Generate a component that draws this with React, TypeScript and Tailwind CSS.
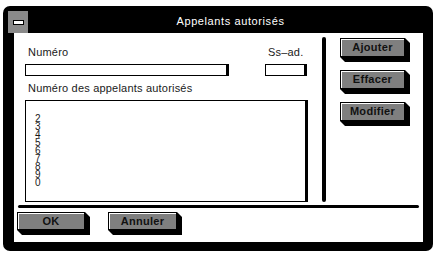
import type { ReactNode } from 'react'

const font = { fontFamily: '"Liberation Sans", Arial, sans-serif' }

function BevelButton({ label, className }: { label: string; className: string }) {
  return (
    <div
      className={`relative bg-black [clip-path:polygon(0_0,calc(100%_-_5px)_0,100%_5px,100%_100%,5px_100%,0_calc(100%_-_5px))] ${className}`}
    >
      <div className="absolute left-0 top-0 right-[5px] bottom-[5px] border border-black bg-[#7f7f7f] shadow-[inset_1px_1px_0_#fff] flex items-center justify-center">
        <span className="text-[11px] font-bold tracking-[0.3px] text-[#111] leading-none">{label}</span>
      </div>
    </div>
  )
}

function Label({ children, className = '' }: { children: ReactNode; className?: string }) {
  return <div className={`text-[11px] tracking-[0.2px] leading-none text-[#1a1a1a] ${className}`}>{children}</div>
}

const numbers = ['2', '3', '4', '5', '6', '7', '8', '9', '0']

export default function App() {
  return (
    <div className="w-[437px] h-[254px] bg-white pl-[3px] pt-[6px]" style={font}>
      <div className="w-[430px] h-[245px] bg-black rounded-[7px] flex flex-col">
        {/* title bar */}
        <div className="h-[27px] flex items-end shrink-0">
          <div className="ml-[5px] w-[20px] h-[22px] bg-[#8a8a8a] flex items-center justify-center">
            <div className="w-[11px] h-[5px] bg-white border border-black" />
          </div>
          <div className="flex-1 self-center pt-[3px] text-center text-white text-[11px] tracking-[0.6px] leading-none">
            Appelants autorisés
          </div>
        </div>

        {/* content */}
        <div className="flex-1 ml-[11px] mr-[10px] mb-[9px] bg-white flex flex-col pt-[4px]">
          <div className="flex h-[165px]">
            <div className="w-[308px] pl-[11px] flex flex-col">
              <div className="flex gap-[36px] pt-[10px]">
                <div className="w-[204px] flex flex-col">
                  <Label className="ml-[3px]">Numéro</Label>
                  <div className="mt-[6px] h-[12px] border border-black border-r-[3px]" />
                </div>
                <div className="w-[42px] flex flex-col">
                  <Label className="ml-[3px]">Ss–ad.</Label>
                  <div className="mt-[6px] h-[12px] border border-black border-r-[3px]" />
                </div>
              </div>
              <Label className="ml-[3px] mt-[7px]">Numéro des appelants autorisés</Label>
              <div className="mt-[6px] w-[283px] h-[104px] border border-black border-r-[3px] pl-[9px] pt-[14px]">
                {numbers.map(n => (
                  <div key={n} className="text-[10px] leading-[8px] h-[8px] text-[#1a1a1a]">
                    {n}
                  </div>
                ))}
              </div>
            </div>
            <div className="w-[4px] h-[165px] bg-black rounded-full" />
            <div className="pl-[14px] pt-[1px] flex flex-col gap-[8px]">
              <BevelButton label="Ajouter" className="w-[70px] h-[24px]" />
              <BevelButton label="Effacer" className="w-[70px] h-[24px]" />
              <BevelButton label="Modifier" className="w-[70px] h-[24px]" />
            </div>
          </div>

          <div className="mt-[3px] mx-[4px] h-[3px] bg-black rounded-full" />

          <div className="flex pl-[3px] pt-[4px] gap-[18px]">
            <BevelButton label="OK" className="w-[73px] h-[23px]" />
            <BevelButton label="Annuler" className="w-[74px] h-[23px]" />
          </div>
        </div>
      </div>
    </div>
  )
}
